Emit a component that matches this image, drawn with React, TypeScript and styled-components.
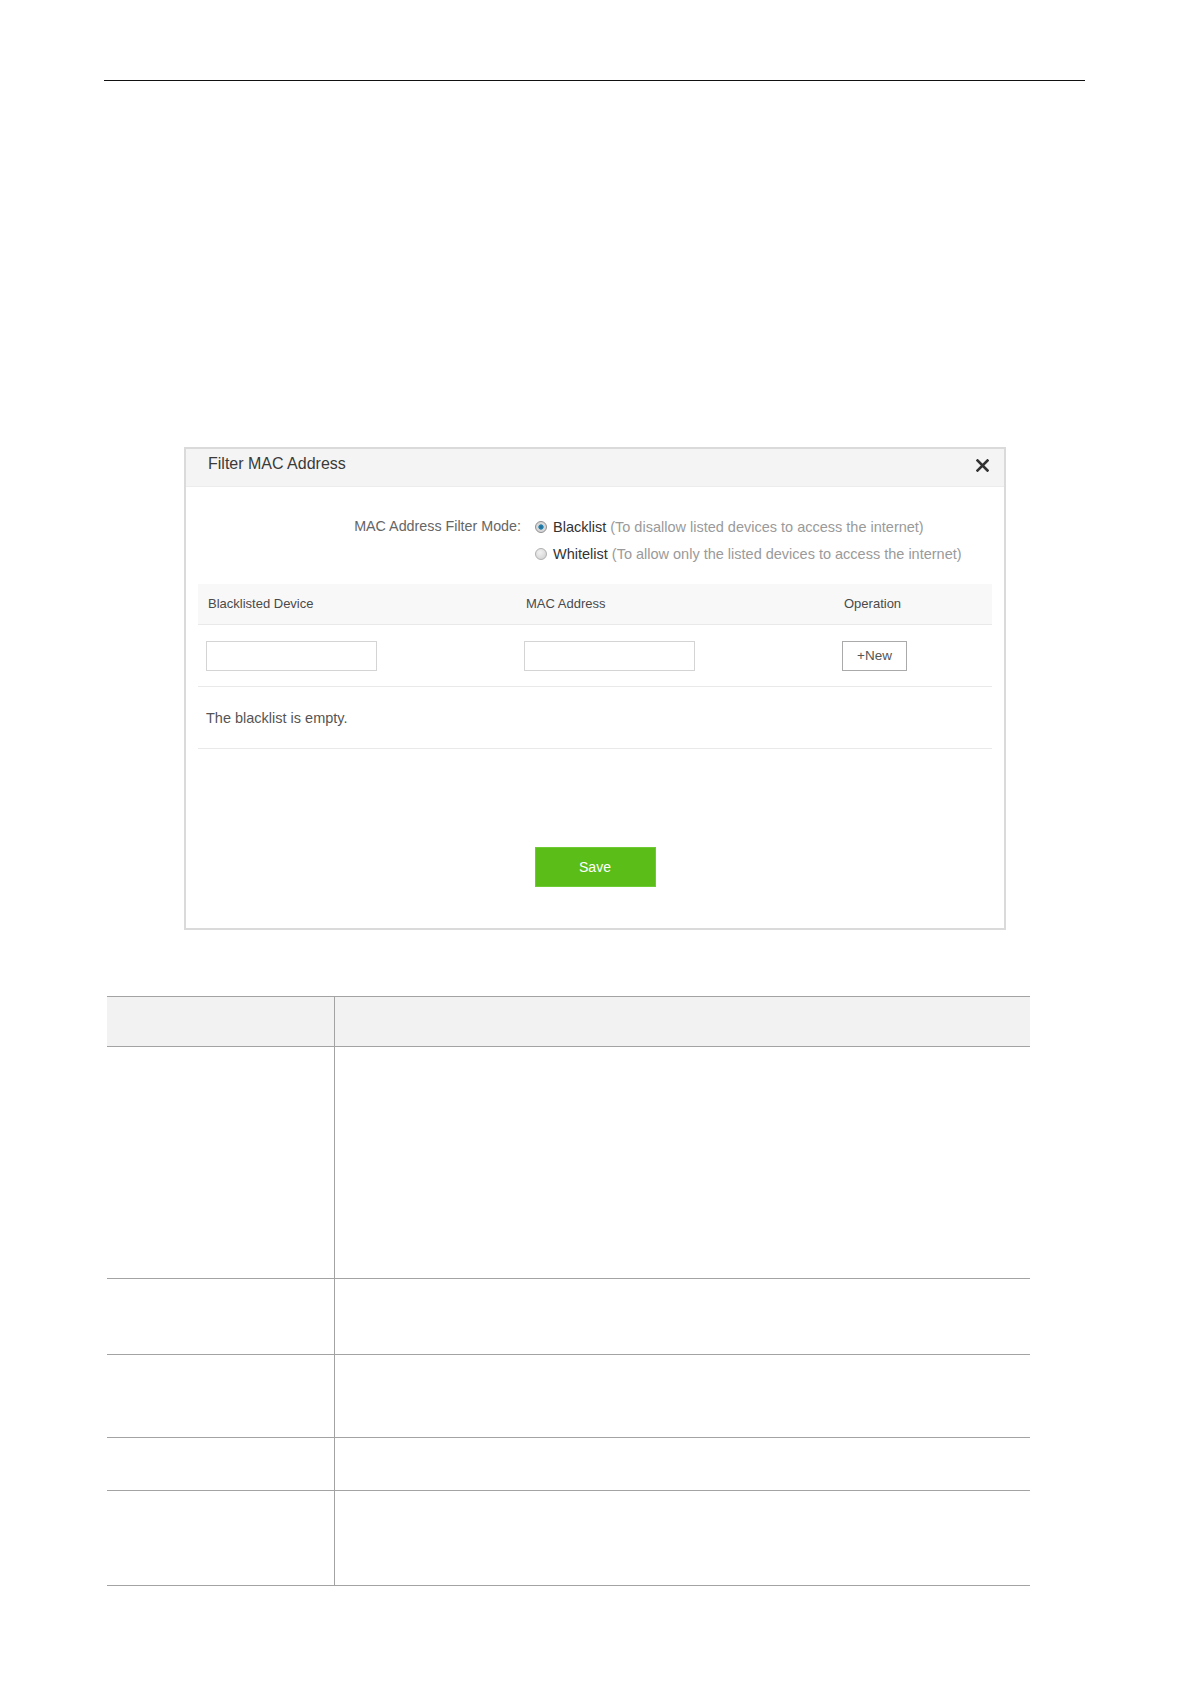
import React from "react";
import styled, { createGlobalStyle } from "styled-components";

const GlobalStyle = createGlobalStyle`
  html, body {
    margin: 0;
    padding: 0;
    background: #ffffff;
  }
  body {
    font-family: "Liberation Sans", Arial, sans-serif;
    color: #333333;
  }
  * { box-sizing: border-box; }
`;

const Page = styled.div`
  width: 1191px;
  min-height: 1684px;
  padding-top: 80px;
  display: flex;
  flex-direction: column;
`;

const TopRule = styled.div`
  margin-left: 104px;
  width: 981px;
  height: 1px;
  background: #111111;
`;

const Dialog = styled.section`
  margin-top: 366px;
  margin-left: 184px;
  width: 822px;
  border: 2px solid #dadada;
  background: #ffffff;
  display: flex;
  flex-direction: column;
`;

const DialogHeader = styled.header`
  height: 38px;
  background: #f4f4f4;
  border-bottom: 1px solid #ececec;
  display: flex;
  align-items: flex-start;
  justify-content: space-between;
  padding: 3px 15px 0 22px;
`;

const DialogTitle = styled.h2`
  margin: 0;
  font-size: 16px;
  line-height: 24px;
  font-weight: normal;
  color: #3a3a3a;
`;

const CloseButton = styled.button`
  margin-top: 6px;
  width: 14px;
  height: 14px;
  padding: 0;
  border: none;
  background: transparent;
  display: flex;
  align-items: center;
  justify-content: center;
  cursor: pointer;
`;

const FilterSection = styled.div`
  padding-top: 26px;
  display: flex;
  align-items: flex-start;
`;

const FilterLabel = styled.div`
  width: 335px;
  text-align: right;
  font-size: 14.3px;
  line-height: 27px;
  color: #666666;
`;

const OptionList = styled.div`
  margin-left: 14px;
  display: flex;
  flex-direction: column;
`;

const Option = styled.label`
  display: flex;
  align-items: center;
  height: 27px;
  font-size: 14.5px;
  color: #333333;
  cursor: pointer;
`;

const RadioDot = styled.span<{ $checked?: boolean }>`
  width: 12px;
  height: 12px;
  margin-right: 6px;
  border-radius: 50%;
  border: 1px solid ${(p) => (p.$checked ? "#8f8f8f" : "#b0b0b0")};
  background: ${(p) =>
    p.$checked
      ? "radial-gradient(circle at 50% 50%, #1d6a92 0, #2a85b2 2.3px, #dadada 3px, #cfcfcf 100%)"
      : "radial-gradient(circle at 40% 35%, #f2f2f2 0, #d8d8d8 70%, #c6c6c6 100%)"};
  flex-shrink: 0;
`;

const OptionHint = styled.span`
  margin-left: 4px;
  color: #9a9a9a;
`;

const ListTable = styled.div`
  margin: 17px 12px 0 12px;
  display: flex;
  flex-direction: column;
`;

const ListRow = styled.div<{ $head?: boolean; $h: number }>`
  display: grid;
  grid-template-columns: 318px 318px 1fr;
  align-items: center;
  height: ${(p) => p.$h}px;
  background: ${(p) => (p.$head ? "#f8f8f8" : "#ffffff")};
  border-bottom: 1px solid #e9e9e9;
`;

const HeadCell = styled.div`
  padding-left: 10px;
  padding-bottom: 1px;
  font-size: 13px;
  color: #4a4a4a;
`;

const BodyCell = styled.div`
  padding-left: 8px;
  display: flex;
  align-items: center;
`;

const TextInput = styled.input`
  width: 171px;
  height: 30px;
  border: 1px solid #d4d4d4;
  background: #ffffff;
  padding: 0 6px;
  font-family: inherit;
  font-size: 13px;
  outline: none;
`;

const NewButton = styled.button`
  width: 65px;
  height: 30px;
  border: 1px solid #aaaaaa;
  background: #ffffff;
  font-family: inherit;
  font-size: 13.5px;
  color: #555555;
  padding: 0;
  cursor: pointer;
`;

const EmptyText = styled.div`
  padding-left: 8px;
  font-size: 14.5px;
  color: #555555;
`;

const DialogFooter = styled.div`
  padding: 98px 0 41px;
  display: flex;
  justify-content: center;
`;

const SaveButton = styled.button`
  width: 121px;
  height: 40px;
  border: 1px solid #6fcb33;
  background: #5bbd17;
  color: #ffffff;
  font-family: inherit;
  font-size: 14px;
  padding: 0;
  cursor: pointer;
`;

const ParamTable = styled.div`
  margin-top: 66px;
  margin-left: 107px;
  width: 923px;
  border-top: 1px solid #a3a3a3;
  display: flex;
  flex-direction: column;
`;

const ParamRow = styled.div<{ $head?: boolean; $h: number }>`
  display: grid;
  grid-template-columns: 228px 1fr;
  height: ${(p) => p.$h}px;
  background: ${(p) => (p.$head ? "#f2f2f2" : "#ffffff")};
  border-bottom: 1px solid #a3a3a3;
`;

const ParamName = styled.div`
  border-right: 1px solid #a3a3a3;
`;

const ParamDesc = styled.div``;

const CloseIcon = () => (
  <svg width="13" height="13" viewBox="0 0 13 13">
    <path d="M1.5 1.5 L11.5 11.5 M11.5 1.5 L1.5 11.5" stroke="#333333" strokeWidth="2.6" strokeLinecap="square" />
  </svg>
);

const paramRows = [232, 76, 83, 53, 95];

export default function App() {
  return (
    <>
      <GlobalStyle />
      <Page>
        <TopRule />
        <Dialog>
          <DialogHeader>
            <DialogTitle>Filter MAC Address</DialogTitle>
            <CloseButton aria-label="Close">
              <CloseIcon />
            </CloseButton>
          </DialogHeader>
          <FilterSection>
            <FilterLabel>MAC Address Filter Mode:</FilterLabel>
            <OptionList>
              <Option>
                <RadioDot $checked />
                Blacklist
                <OptionHint>(To disallow listed devices to access the internet)</OptionHint>
              </Option>
              <Option>
                <RadioDot />
                Whitelist
                <OptionHint>(To allow only the listed devices to access the internet)</OptionHint>
              </Option>
            </OptionList>
          </FilterSection>
          <ListTable>
            <ListRow $head $h={41}>
              <HeadCell>Blacklisted Device</HeadCell>
              <HeadCell>MAC Address</HeadCell>
              <HeadCell>Operation</HeadCell>
            </ListRow>
            <ListRow $h={62}>
              <BodyCell>
                <TextInput />
              </BodyCell>
              <BodyCell>
                <TextInput />
              </BodyCell>
              <BodyCell>
                <NewButton>+New</NewButton>
              </BodyCell>
            </ListRow>
            <ListRow $h={62}>
              <EmptyText>The blacklist is empty.</EmptyText>
            </ListRow>
          </ListTable>
          <DialogFooter>
            <SaveButton>Save</SaveButton>
          </DialogFooter>
        </Dialog>
        <ParamTable>
          <ParamRow $head $h={50}>
            <ParamName />
            <ParamDesc />
          </ParamRow>
          {paramRows.map((h, i) => (
            <ParamRow key={i} $h={h}>
              <ParamName />
              <ParamDesc />
            </ParamRow>
          ))}
        </ParamTable>
      </Page>
    </>
  );
}
